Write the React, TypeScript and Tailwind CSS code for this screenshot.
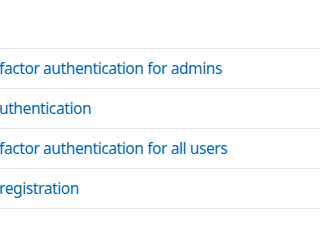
const ROWS = [
  "factor authentication for admins",
  "uthentication",
  "factor authentication for all users",
  "registration",
];

export default function App() {
  return (
    <div
      className="h-[214px] w-[320px] overflow-hidden bg-white"
      style={{ fontFamily: '"Noto Sans", "Open Sans", sans-serif' }}
    >
      <div className="h-[49px] border-b border-[#e5e5e5]" />
      {ROWS.map((label) => (
        <div
          key={label}
          className="flex h-[40px] items-center overflow-hidden border-b border-[#e5e5e5]"
        >
          <a className="-ml-[1px] whitespace-nowrap text-[15.5px] tracking-[-0.4px] text-[#0067b8]">
            {label}
          </a>
        </div>
      ))}
    </div>
  );
}
